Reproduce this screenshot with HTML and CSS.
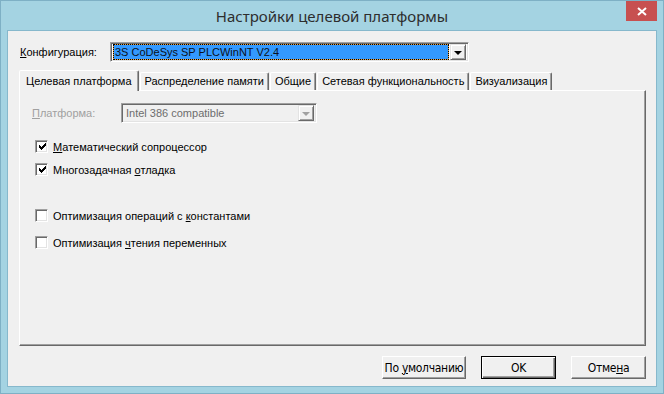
FILE: index.html
```html
<!DOCTYPE html>
<html lang="ru">
<head>
  <meta charset="UTF-8">
  <title>Настройки целевой платформы</title>
  <link rel="stylesheet" href="styles.css">
</head>
<body>
  <div class="window">
    <div class="titlebar">
      <span class="title">Настройки целевой платформы</span>
      <div class="close">
        <svg width="10" height="9" viewBox="0 0 10 9"><path d="M1 1 L9 8 M9 1 L1 8" stroke="#fff" stroke-width="2"/></svg>
      </div>
    </div>

    <div class="client">
      <div class="config-row">
        <label class="config-label"><u>К</u>онфигурация:</label>
        <div class="combo config-combo">
          <div class="combo-sel">3S CoDeSys SP PLCWinNT V2.4</div>
          <div class="drop"><span class="arrow"></span></div>
        </div>
      </div>

      <div class="tabs">
        <div class="tab active">Целевая платформа</div>
        <div class="tab">Распределение памяти</div>
        <div class="tab">Общие</div>
        <div class="tab">Сетевая функциональность</div>
        <div class="tab">Визуализация</div>
      </div>

      <div class="panel">
        <div class="platform-row">
          <label class="platform-label"><u>П</u>латформа:</label>
          <div class="combo platform-combo">
            <div class="combo-text">Intel 386 compatible</div>
            <div class="drop"><span class="arrow disabled"></span></div>
          </div>
        </div>

        <div class="check-group first">
          <div class="check-row">
            <span class="checkbox"><svg width="7" height="7" viewBox="0 0 7 7" shape-rendering="crispEdges"><path d="M6 0h1v3h-1v1h-1v1h-1v1h-1v1h-1v-1h-1v-1h-1v-3h1v1h1v1h1v-1h1v-1h1z"/></svg></span>
            <span><u>М</u>атематический сопроцессор</span>
          </div>
          <div class="check-row">
            <span class="checkbox"><svg width="7" height="7" viewBox="0 0 7 7" shape-rendering="crispEdges"><path d="M6 0h1v3h-1v1h-1v1h-1v1h-1v1h-1v-1h-1v-1h-1v-3h1v1h1v1h1v-1h1v-1h1z"/></svg></span>
            <span>Многозадачная <u>о</u>тладка</span>
          </div>
        </div>

        <div class="check-group second">
          <div class="check-row">
            <span class="checkbox"></span>
            <span>Оптимизация операций с <u>к</u>онстантами</span>
          </div>
          <div class="check-row">
            <span class="checkbox"></span>
            <span>Оптимизация <u>ч</u>тения переменных</span>
          </div>
        </div>
      </div>

      <div class="buttons">
        <div class="btn wide"><span>По <u>у</u>молчанию</span></div>
        <div class="btn default"><span>OK</span></div>
        <div class="btn"><span>Отме<u>н</u>а</span></div>
      </div>
    </div>
  </div>
</body>
</html>
```

FILE: styles.css
```css
body {
  margin: 0;
  font-family: "Liberation Sans", Arial, sans-serif;
  font-size: 11px;
  color: #000;
  background: #a4d3e2;
}

u {
  text-decoration: underline;
  text-underline-offset: 1px;
}

.window {
  position: relative;
  width: 664px;
  height: 394px;
  box-sizing: border-box;
  background: #a4d3e2;
  border: 1px solid #7eb0c5;
  display: flex;
  flex-direction: column;
}

.titlebar {
  height: 29px;
  display: flex;
  align-items: center;
  justify-content: center;
}

.title {
  font-family: "Noto Sans", "Open Sans", sans-serif;
  font-size: 15px;
  color: #2d2d2d;
  margin-top: 1px;
}

.close {
  position: absolute;
  top: 0;
  right: 6px;
  width: 31px;
  height: 20px;
  background: #c75050;
  display: flex;
  align-items: center;
  justify-content: center;
}

.client {
  flex: 1;
  margin: 0 6px 6px 6px;
  border: 1px solid #86b8cc;
  background: #f0f0f0;
  display: flex;
  flex-direction: column;
}

/* sunken field, classic 3D */
.combo {
  box-sizing: border-box;
  height: 20px;
  border: 1px solid;
  border-color: #a0a0a0 #fff #fff #a0a0a0;
  box-shadow: inset 1px 1px 0 #696969, inset -1px -1px 0 #e3e3e3;
  padding: 2px;
  display: flex;
  gap: 1px;
}

.drop {
  box-sizing: border-box;
  width: 16px;
  height: 16px;
  margin-top: -1px;
  background: #f0f0f0;
  border: 1px solid;
  border-color: #e3e3e3 #696969 #696969 #e3e3e3;
  box-shadow: inset 1px 1px 0 #fff, inset -1px -1px 0 #a0a0a0;
  display: flex;
  align-items: center;
  justify-content: center;
}

.arrow {
  width: 0;
  height: 0;
  border-left: 4px solid transparent;
  border-right: 4px solid transparent;
  border-top: 4px solid #000;
  margin-top: 1px;
}

.arrow.disabled {
  border-top-color: #a0a0a0;
}

.config-row {
  display: flex;
  align-items: center;
  margin-top: 11px;
  padding-left: 12px;
}

.config-label {
  width: 90px;
}

.config-combo {
  width: 359px;
  background: #fff;
}

.combo-sel {
  flex: 1;
  margin-top: -1px;
  height: 16px;
  box-sizing: border-box;
  border: 1px dotted #000;
  background: linear-gradient(#3399ff, #3399ff) padding-box, #e8a040 border-box;
  color: #0a1020;
  line-height: 14px;
  padding-left: 1px;
  white-space: nowrap;
}

.tabs {
  display: flex;
  align-items: flex-end;
  margin-top: 8px;
  padding-left: 12px;
  height: 20px;
  position: relative;
  z-index: 1;
}

.tab {
  box-sizing: border-box;
  height: 18px;
  padding: 0 4px;
  line-height: 16px;
  border: 1px solid;
  border-bottom: none;
  border-color: #fff #696969 transparent #fff;
  border-radius: 2px 2px 0 0;
  box-shadow: inset -1px 0 0 #a0a0a0;
  white-space: nowrap;
  margin-right: 1px;
}

.tab.active {
  height: 21px;
  margin-bottom: -1px;
  padding: 0 6px;
  line-height: 20px;
  margin-left: -1px;
  background: #f0f0f0;
}

.panel {
  box-sizing: border-box;
  width: 627px;
  height: 256px;
  margin-left: 11px;
  border: 1px solid;
  border-color: #fff #696969 #696969 #fff;
  box-shadow: inset -1px -1px 0 #a0a0a0;
  padding: 12px 0 0 12px;
}

.platform-row {
  display: flex;
  align-items: center;
}

.platform-label {
  width: 89px;
  color: #a0a0a0;
}

.platform-combo {
  width: 196px;
  background: #f0f0f0;
}

.combo-text {
  flex: 1;
  color: #6d6d6d;
  line-height: 14px;
  padding-left: 2px;
}

.check-group {
  display: flex;
  flex-direction: column;
  gap: 10px;
  padding-left: 3px;
}

.check-group.first {
  margin-top: 17px;
}

.check-group.second {
  margin-top: 33px;
  gap: 14px;
}

.check-row {
  display: flex;
  align-items: center;
  gap: 5px;
  height: 13px;
}

.checkbox {
  box-sizing: border-box;
  width: 13px;
  height: 13px;
  background: #fff;
  border: 1px solid;
  border-color: #a0a0a0 #fff #fff #a0a0a0;
  box-shadow: inset 1px 1px 0 #696969, inset -1px -1px 0 #e3e3e3;
  display: flex;
  align-items: center;
  justify-content: center;
}

.checkbox svg {
  margin-left: 1px;
}

.buttons {
  display: flex;
  justify-content: flex-end;
  gap: 15px;
  margin-top: 10px;
  padding-right: 10px;
}

.btn {
  box-sizing: border-box;
  width: 75px;
  height: 23px;
  background: #f0f0f0;
  border: 1px solid;
  border-color: #fff #696969 #696969 #fff;
  box-shadow: inset -1px -1px 0 #a0a0a0;
  display: flex;
  align-items: center;
  justify-content: center;
  font-family: "Liberation Sans Narrow", "DejaVu Sans Condensed", sans-serif;
  font-size: 12px;
  letter-spacing: -0.3px;
  white-space: nowrap;
}

.btn.wide {
  width: 84px;
}

.btn.default {
  border-color: #000;
  box-shadow: inset 1px 1px 0 #fff, inset -1px -1px 0 #696969, inset -2px -2px 0 #a0a0a0;
}
```
